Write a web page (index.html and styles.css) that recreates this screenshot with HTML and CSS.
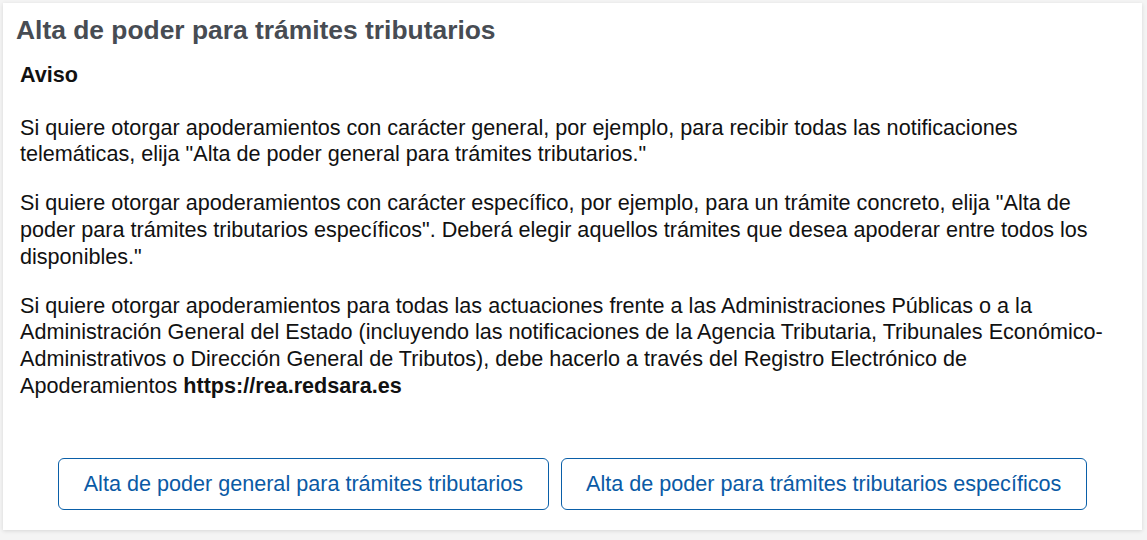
FILE: index.html
```html
<!DOCTYPE html>
<html lang="es">
<head>
<meta charset="utf-8">
<link rel="stylesheet" href="styles.css">
</head>
<body>
<div class="card">
  <h1 class="title">Alta de poder para trámites tributarios</h1>
  <div class="content">
    <p class="notice">Aviso</p>
    <p class="para">Si quiere otorgar apoderamientos con carácter general, por ejemplo, para recibir todas las notificaciones telemáticas, elija "Alta de poder general para trámites tributarios."</p>
    <p class="para">Si quiere otorgar apoderamientos con carácter específico, por ejemplo, para un trámite concreto, elija "Alta de poder para trámites tributarios específicos". Deberá elegir aquellos trámites que desea apoderar entre todos los disponibles."</p>
    <p class="para">Si quiere otorgar apoderamientos para todas las actuaciones frente a las Administraciones Públicas o a la Administración General del Estado (incluyendo las notificaciones de la Agencia Tributaria, Tribunales Económico-Administrativos o Dirección General de Tributos), debe hacerlo a través del Registro Electrónico de Apoderamientos <strong>https://rea.redsara.es</strong></p>
  </div>
  <div class="actions">
    <button class="btn">Alta de poder general para trámites tributarios</button>
    <button class="btn">Alta de poder para trámites tributarios específicos</button>
  </div>
</div>
</body>
</html>
```

FILE: styles.css
```css
html, body {
  margin: 0;
  padding: 0;
  background: #f4f4f4;
}
body {
  padding: 3px 5px 10px 3px;
  font-family: "Liberation Sans", Arial, sans-serif;
}
.card {
  background: #fff;
  box-shadow: 0 1px 4px rgba(0,0,0,0.12);
  padding: 12px 13px 20px 13px;
  height: 527px;
  box-sizing: border-box;
  display: flex;
  flex-direction: column;
}
.title {
  margin: 0;
  font-size: 26.4px;
  line-height: 30px;
  font-weight: bold;
  color: #474c53;
}
.content {
  padding: 0 4px;
  color: #111;
  font-size: 21.6px;
  line-height: 26.67px;
  flex: 1;
}
.notice {
  margin: 16.7px 0 26.4px;
  font-weight: bold;
}
.para {
  margin: 0 0 22.3px;
}
.actions {
  display: flex;
  justify-content: center;
  gap: 12px;
}
.btn {
  font-family: "Liberation Sans", Arial, sans-serif;
  font-size: 21.6px;
  color: #0a5aa5;
  background: #fff;
  border: 1px solid #0a5fa8;
  border-radius: 6px;
  height: 52px;
  padding: 0 24.5px;
  cursor: pointer;
}
```
